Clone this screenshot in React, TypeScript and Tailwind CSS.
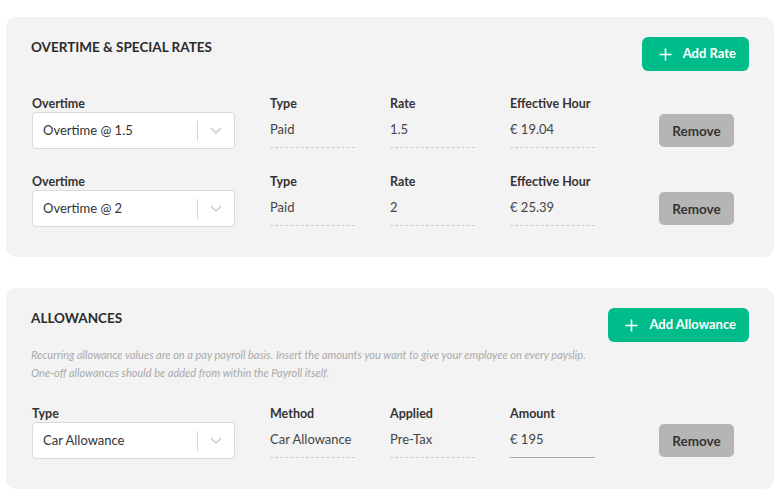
import React from "react";

const font = { fontFamily: "Lato, 'Liberation Sans', sans-serif" };

function Chevron() {
  return (
    <svg width="12" height="8" viewBox="0 0 12 8" fill="none">
      <path d="M1.5 1.5 L6 6 L10.5 1.5" stroke="#cccccc" strokeWidth="1.6" strokeLinecap="round" strokeLinejoin="round" />
    </svg>
  );
}

function Plus() {
  return (
    <svg width="13" height="13" viewBox="0 0 13 13" fill="none">
      <path d="M6.5 0.5 V12.5 M0.5 6.5 H12.5" stroke="white" strokeWidth="1.6" />
    </svg>
  );
}

function Select({ value }: { value: string }) {
  return (
    <div className="w-[203px] h-[37px] bg-white border border-[#d9d9d9] rounded-[4px] flex items-center">
      <div className="flex-1 pl-[10px] text-[13px] text-[#333]">{value}</div>
      <div className="w-px h-[20px] bg-[#d6d6d6]" />
      <div className="w-[36px] flex justify-center">
        <Chevron />
      </div>
    </div>
  );
}

function Label({ children }: { children: React.ReactNode }) {
  return <div className="text-[12.5px] leading-[16px] font-bold text-[#333] pt-px">{children}</div>;
}

function Value({ children, solid }: { children: React.ReactNode; solid?: boolean }) {
  return (
    <div
      className={
        "h-[36px] flex items-center text-[13px] text-[#444] " +
        (solid ? "border-b border-solid border-[#a8a8a8]" : "border-b border-dashed border-[#cccccc]")
      }
    >
      {children}
    </div>
  );
}

type Row = { l1: string; v1: string; cols: { l: string; v: string; solid?: boolean }[] };

function FieldRow({ row }: { row: Row }) {
  return (
    <div className="flex items-start">
      <div className="w-[239px] pl-px">
        <Label>{row.l1}</Label>
        <Select value={row.v1} />
      </div>
      {row.cols.map((c, i) => (
        <div key={i} className={i === 2 ? "w-[149px]" : "w-[120px]"}>
          <Label>{c.l}</Label>
          <div className="w-[85px]">
            <Value solid={c.solid}>{c.v}</Value>
          </div>
        </div>
      ))}
      <div className="pt-[19px]">
        <button className="w-[75px] h-[33px] pt-px rounded-[5px] bg-[#b5b5b5] text-[13.5px] font-bold text-[#333]">
          Remove
        </button>
      </div>
    </div>
  );
}

function Header({ title, button }: { title: string; button: string }) {
  return (
    <div className="flex items-start justify-between">
      <div className="text-[13.5px] leading-[18px] font-bold text-[#2b2b2b] pt-px">{title}</div>
      <button className="h-[34px] pl-[17px] pr-[13px] rounded-[6px] bg-[#00bc8b] text-white text-[13px] font-bold flex items-center gap-[11px]">
        <Plus />
        <span>{button}</span>
      </button>
    </div>
  );
}

export default function App() {
  const rows1: Row[] = [
    {
      l1: "Overtime",
      v1: "Overtime @ 1.5",
      cols: [
        { l: "Type", v: "Paid" },
        { l: "Rate", v: "1.5" },
        { l: "Effective Hour", v: "€ 19.04" },
      ],
    },
    {
      l1: "Overtime",
      v1: "Overtime @ 2",
      cols: [
        { l: "Type", v: "Paid" },
        { l: "Rate", v: "2" },
        { l: "Effective Hour", v: "€ 25.39" },
      ],
    },
  ];
  const row2: Row = {
    l1: "Type",
    v1: "Car Allowance",
    cols: [
      { l: "Method", v: "Car Allowance" },
      { l: "Applied", v: "Pre-Tax" },
      { l: "Amount", v: "€ 195", solid: true },
    ],
  };
  return (
    <div className="w-[781px] min-h-[500px] bg-white pt-[17px] px-[6px]" style={font}>
      <div className="w-[768px] bg-[#f3f3f3] rounded-[10px] px-[25px] pt-[20px] pb-[30px]">
        <Header title="OVERTIME & SPECIAL RATES" button="Add Rate" />
        <div className="mt-[24px] flex flex-col gap-[24px]">
          {rows1.map((r, i) => (
            <FieldRow key={i} row={r} />
          ))}
        </div>
      </div>
      <div className="w-[768px] bg-[#f3f3f3] rounded-[10px] px-[25px] pt-[20px] pb-[30px] mt-[31px]">
        <Header title="ALLOWANCES" button="Add Allowance" />
        <div className="mt-[4px] text-[11px] leading-[18px] italic text-[#aaaaaa]">
          <div>Recurring allowance values are on a pay payroll basis. Insert the amounts you want to give your employee on every payslip.</div>
          <div>One-off allowances should be added from within the Payroll itself.</div>
        </div>
        <div className="mt-[23px]">
          <FieldRow row={row2} />
        </div>
      </div>
    </div>
  );
}
